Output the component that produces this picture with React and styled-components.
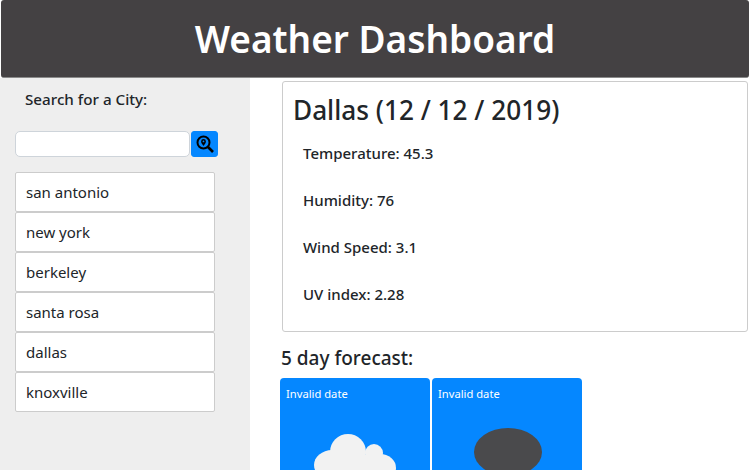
import React from "react";
import styled, { createGlobalStyle } from "styled-components";

const GlobalStyle = createGlobalStyle`
  html, body {
    margin: 0;
    height: 100%;
    overflow: hidden;
    background: #fff;
    color: #212529;
    font-family: "Noto Sans", "Open Sans", sans-serif;
  }
  * { box-sizing: border-box; }
`;

const Page = styled.div`
  width: 749px;
  height: 470px;
  overflow: hidden;
`;

const Header = styled.header`
  height: 78px;
  margin-left: 1px;
  background: #444143;
  border-radius: 3px;
  border-bottom: 1px solid #8a8a8a;
  display: flex;
  align-items: center;
  justify-content: center;
`;

const Title = styled.h1`
  margin: 0;
  color: #fff;
  font-size: 37px;
  font-weight: 600;
`;

const Columns = styled.div`
  display: flex;
  height: 392px;
`;

const Sidebar = styled.aside`
  width: 250px;
  flex: none;
  background: #eeeeee;
  padding: 11px 0 0 15px;
`;

const SearchLabel = styled.div`
  margin-left: 10px;
  font-size: 15.2px;
  line-height: 21px;
  font-weight: 500;
`;

const SearchRow = styled.div`
  display: flex;
  gap: 1px;
  margin-top: 21px;
`;

const SearchInput = styled.input`
  width: 175px;
  height: 26px;
  border: 1px solid #ced4da;
  border-radius: 5px;
  background: #fff;
`;

const SearchButton = styled.button`
  width: 27px;
  height: 26px;
  padding: 0;
  border: 1px solid #0587ff;
  border-radius: 3px;
  background: #0587ff;
  display: flex;
  align-items: center;
  justify-content: center;
`;

const CityList = styled.ul`
  list-style: none;
  margin: 15px 0 0;
  padding: 0;
  width: 200px;
`;

const CityItem = styled.li`
  height: 40px;
  padding-left: 10px;
  background: #fff;
  border: 1px solid #cccccc;
  border-radius: 2px;
  font-size: 15px;
  line-height: 38px;
`;

const Main = styled.main`
  flex: 1;
  padding: 3px 1px 0 30px;
`;

const WeatherCard = styled.section`
  height: 251px;
  margin-left: 2px;
  padding: 12px 11px 0 10px;
  border: 1px solid #cccccc;
  border-radius: 3px;
`;

const CityTitle = styled.h2`
  margin: 0 0 16px;
  font-size: 26.2px;
  line-height: 32px;
  font-weight: 500;
`;

const Stat = styled.p`
  margin: 0 0 25px 10px;
  font-size: 15px;
  line-height: 22px;
  font-weight: 500;
`;

const ForecastTitle = styled.h3`
  margin: 15px 0 9px 1px;
  font-size: 19px;
  line-height: 22px;
  font-weight: 500;
`;

const ForecastRow = styled.div`
  display: flex;
  gap: 2px;
`;

const ForecastCard = styled.div`
  width: 150px;
  height: 140px;
  padding: 9px 6px;
  background: #0587ff;
  border-radius: 4px;
  color: #fff;
  font-size: 11.2px;
  line-height: 14px;
  display: flex;
  flex-direction: column;
  align-items: center;
`;

const ForecastDate = styled.div`
  align-self: flex-start;
`;

const IconSlot = styled.div`
  margin-top: ${props => props.$top}px;
  line-height: 0;
`;

const cities = ["san antonio", "new york", "berkeley", "santa rosa", "dallas", "knoxville"];
const stats = ["Temperature: 45.3", "Humidity: 76", "Wind Speed: 3.1", "UV index: 2.28"];

const SearchIcon = () => (
  <svg width="18" height="18" viewBox="0 0 18 18" fill="none">
    <circle cx="7.5" cy="7.5" r="6" stroke="#000" strokeWidth="2" />
    <path d="M12 12l5 5" stroke="#000" strokeWidth="2.6" />
    <path d="M7.5 4a2.4 2.4 0 0 0-2.4 2.4c0 1.7 2.4 4.4 2.4 4.4s2.4-2.7 2.4-4.4A2.4 2.4 0 0 0 7.5 4z" fill="#000" />
    <circle cx="7.5" cy="6.4" r="0.9" fill="#0587ff" />
  </svg>
);

const CloudIcon = () => (
  <svg width="84" height="60" viewBox="0 0 84 60" fill="#f2f2f2">
    <circle cx="35" cy="19" r="18" />
    <circle cx="61" cy="20" r="9" />
    <ellipse cx="19" cy="32" rx="18" ry="15" />
    <ellipse cx="67" cy="35" rx="16" ry="14" />
    <rect x="19" y="22" width="48" height="38" />
  </svg>
);

const MoonIcon = () => (
  <svg width="72" height="60" viewBox="0 0 72 60">
    <ellipse cx="37" cy="24" rx="34" ry="24" fill="#4a4a4c" />
  </svg>
);

const App = () => (
  <Page>
    <GlobalStyle />
    <Header>
      <Title>Weather Dashboard</Title>
    </Header>
    <Columns>
      <Sidebar>
        <SearchLabel>Search for a City:</SearchLabel>
        <SearchRow>
          <SearchInput />
          <SearchButton aria-label="search"><SearchIcon /></SearchButton>
        </SearchRow>
        <CityList>
          {cities.map(city => <CityItem key={city}>{city}</CityItem>)}
        </CityList>
      </Sidebar>
      <Main>
        <WeatherCard>
          <CityTitle>Dallas (12 / 12 / 2019)</CityTitle>
          {stats.map(stat => <Stat key={stat}>{stat}</Stat>)}
        </WeatherCard>
        <ForecastTitle>5 day forecast:</ForecastTitle>
        <ForecastRow>
          <ForecastCard>
            <ForecastDate>Invalid date</ForecastDate>
            <IconSlot $top={32}><CloudIcon /></IconSlot>
          </ForecastCard>
          <ForecastCard>
            <ForecastDate>Invalid date</ForecastDate>
            <IconSlot $top={27}><MoonIcon /></IconSlot>
          </ForecastCard>
        </ForecastRow>
      </Main>
    </Columns>
  </Page>
);

export default App;
